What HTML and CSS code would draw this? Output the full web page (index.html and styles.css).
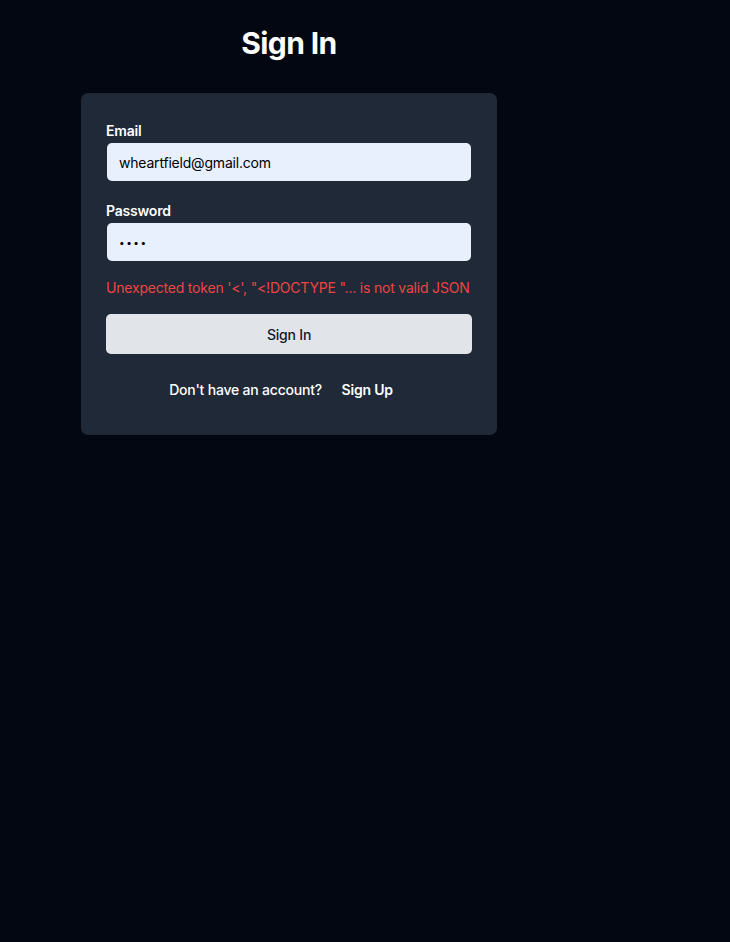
FILE: index.html
```html
<!DOCTYPE html>
<html lang="en">
<head>
<meta charset="utf-8">
<title>Sign In</title>
<link rel="stylesheet" href="styles.css">
</head>
<body>
<main class="page">
  <h1 class="title">Sign In</h1>
  <form class="card">
    <label class="label" for="email">Email</label>
    <input class="input" id="email" type="text" value="wheartfield@gmail.com">
    <label class="label label-second" for="password">Password</label>
    <input class="input input-password" id="password" type="password" value="abcd">
    <p class="error">Unexpected token '&lt;', "&lt;!DOCTYPE "... is not valid JSON</p>
    <button class="submit" type="button">Sign In</button>
    <div class="footer">
      <span class="prompt">Don't have an account? </span><button class="link" type="button">Sign Up</button>
    </div>
  </form>
</main>
</body>
</html>
```

FILE: styles.css
```css
html, body {
  margin: 0;
  padding: 0;
  background: #030712;
  min-height: 100%;
}
body {
  font-family: Inter, "Liberation Sans", sans-serif;
  color: #ffffff;
  height: 942px;
  letter-spacing: -0.2px;
}
.page {
  width: 416px;
  margin-left: 81px;
  padding-top: 25px;
}
.title {
  margin: 0 0 32px;
  font-size: 30px;
  line-height: 36px;
  font-weight: 700;
  letter-spacing: -0.6px;
  text-align: center;
  color: #ffffff;
}
.card {
  background: #1f2937;
  border-radius: 7px;
  padding: 28px 25px 35px;
  display: flex;
  flex-direction: column;
}
.label {
  font-size: 14px;
  line-height: 20px;
  font-weight: 600;
  margin-bottom: 2px;
  color: #ffffff;
}
.label-second {
  margin-top: 20px;
}
.input {
  box-sizing: border-box;
  height: 38px;
  margin: 0 1px;
  border: none;
  border-radius: 5px;
  background: #e8f0fe;
  color: #000000;
  font-family: Inter, "Liberation Sans", sans-serif;
  font-size: 14px;
  letter-spacing: -0.2px;
  padding: 0 12px;
  outline: none;
}
.input-password {
  font-size: 10px;
  letter-spacing: 1.5px;
}
.error {
  margin: 17px 0 0;
  font-size: 14px;
  line-height: 20px;
  white-space: nowrap;
  color: #ef4444;
}
.submit {
  margin-top: 16px;
  height: 40px;
  border: none;
  border-radius: 5px;
  background: #e1e5e9;
  color: #111827;
  font-family: Inter, "Liberation Sans", sans-serif;
  font-size: 14px;
  letter-spacing: -0.2px;
  font-weight: 500;
  cursor: pointer;
}
.footer {
  margin-top: 26px;
  display: flex;
  justify-content: center;
  align-items: center;
  font-size: 14px;
  line-height: 20px;
}
.prompt {
  font-weight: 500;
  white-space: pre;
}
.link {
  background: none;
  border: none;
  color: #ffffff;
  padding: 0 16px;
  font-family: Inter, "Liberation Sans", sans-serif;
  font-size: 14px;
  letter-spacing: -0.2px;
  line-height: 20px;
  font-weight: 600;
  cursor: pointer;
}
```
